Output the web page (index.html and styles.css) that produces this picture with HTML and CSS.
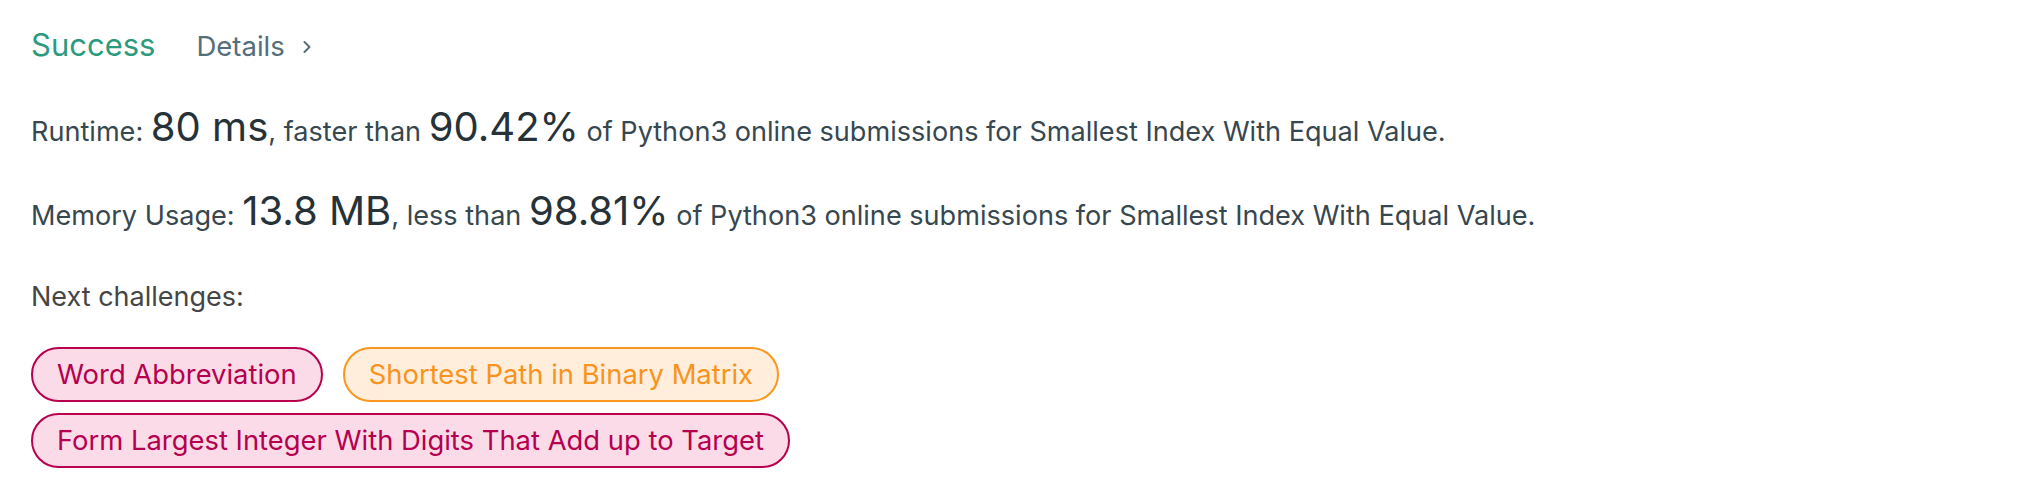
FILE: index.html
```html
<!DOCTYPE html>
<html lang="en">
<head>
<meta charset="utf-8">
<title>Submission result</title>
<link rel="stylesheet" href="styles.css">
</head>
<body>
<div class="page">
  <div class="header">
    <span class="status">Success</span>
    <a class="details">Details
      <svg class="chev" width="10" height="14" viewBox="0 0 10 14"><path d="M2.5 2 L7.5 7 L2.5 12" fill="none" stroke="currentColor" stroke-width="2" stroke-linecap="round" stroke-linejoin="round"/></svg>
    </a>
  </div>
  <p class="stat runtime">Runtime: <span class="big">80 ms</span>, faster than <span class="big">90.42%</span> of Python3 online submissions for Smallest Index With Equal Value.</p>
  <p class="stat memory">Memory Usage: <span class="big">13.8 MB</span>, less than <span class="big">98.81%</span> of Python3 online submissions for Smallest Index With Equal Value.</p>
  <p class="next-title">Next challenges:</p>
  <div class="pills">
    <a class="pill hard">Word Abbreviation</a>
    <a class="pill medium">Shortest Path in Binary Matrix</a>
    <a class="pill hard">Form Largest Integer With Digits That Add up to Target</a>
  </div>
</div>
</body>
</html>
```

FILE: styles.css
```css
html, body {
  margin: 0;
  padding: 0;
  background: #ffffff;
}

body {
  font-family: Inter, "Noto Sans", "Liberation Sans", sans-serif;
  color: #37474f;
}

.page {
  padding: 25px 0 0 31px;
}

.header {
  display: flex;
  align-items: baseline;
  height: 40px;
  line-height: 40px;
}

.status {
  font-size: 31px;
  color: #2b9b80;
}

.details {
  margin-left: 41px;
  font-size: 27.5px;
  color: #546e7a;
  display: inline-flex;
  align-items: center;
  gap: 17px;
}

.chev {
  display: block;
  position: relative;
  top: 1px;
}

.stat {
  margin: 0;
  font-size: 27.1px;
  line-height: 40px;
  color: #37474f;
  white-space: nowrap;
}

.runtime {
  margin-top: 42px;
}

.memory {
  margin-top: 39px;
}

.big {
  font-size: 40px;
  color: #263238;
}

.next-title {
  margin: 41px 0 0;
  font-size: 27px;
  line-height: 40px;
  color: #454545;
}

.pills {
  margin-top: 30px;
  display: flex;
  flex-wrap: wrap;
  gap: 11px 20px;
  max-width: 800px;
}

.pill {
  display: inline-block;
  height: 55px;
  box-sizing: border-box;
  padding: 0 24px;
  border: 2px solid;
  border-radius: 28px;
  font-size: 27.4px;
  line-height: 51px;
  white-space: nowrap;
}

.pill.hard {
  color: #b5004e;
  border-color: #b8004f;
  background: #fadbe7;
}

.pill.medium {
  color: #f8931d;
  border-color: #fa961c;
  background: #feeedb;
}
```
